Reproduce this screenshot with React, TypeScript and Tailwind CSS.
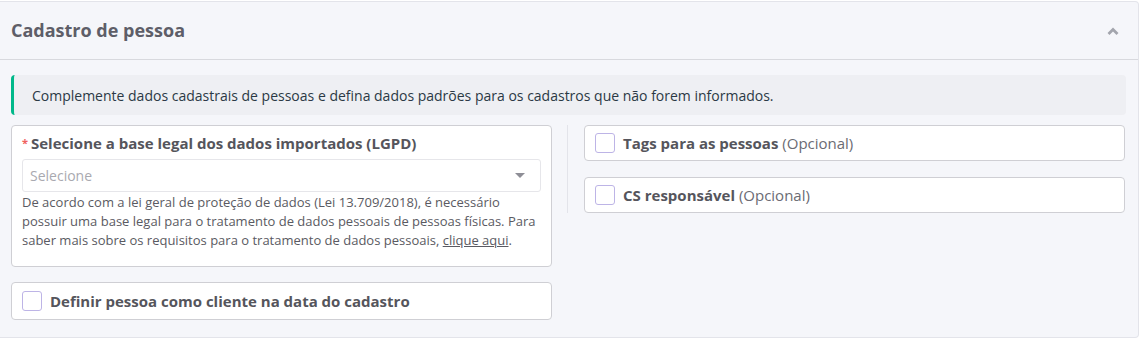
import React from 'react';

const font = { fontFamily: '"Open Sans", "Noto Sans", sans-serif' };

const CheckCard: React.FC<{ label: string; optional?: boolean; tall?: boolean }> = ({ label, optional, tall }) => (
  <label
    className={`flex items-center gap-2 bg-white border border-[#cfcfd4] rounded-[4px] px-[10px] ${
      tall ? 'h-[38px]' : 'h-[36px]'
    }`}
  >
    <span className="w-[20px] h-[20px] rounded-[3px] border border-[#bdb4e6] bg-white flex-shrink-0" />
    <span className="text-[15px] text-[#55555c]">
      <b className="font-bold">{label}</b>
      {optional && <span className="font-normal text-[#6b6b73]"> (Opcional)</span>}
    </span>
  </label>
);

export default function App() {
  return (
    <div className="w-[1140px] h-[339px] bg-white" style={font}>
      <div className="mt-px w-[1139px] h-[337px] bg-[#f5f6fa] border-t border-r border-b border-[#e3e4ea] rounded-r-[4px]">
        <div className="h-[58px] flex items-center justify-between pl-[11px] pr-[18px] border-b border-[#d8d9de]">
          <h2 className="text-[18px] font-bold text-[#5e5e68]">Cadastro de pessoa</h2>
          <svg width="14" height="10" viewBox="0 0 14 10" className="mt-[1px]">
            <path d="M2.5 8 L7 3.5 L11.5 8" fill="none" stroke="#a3a5ad" strokeWidth="2.8" />
          </svg>
        </div>

        <div className="pl-[11px] pr-[12px] pt-[15px]">
          <div className="h-[40px] flex items-center bg-[#eeeff3] border-l-[3px] border-[#00b88a] rounded-[4px] pl-[18px] text-[14px] text-[#2b3945]">
            Complemente dados cadastrais de pessoas e defina dados padrões para os cadastros que não forem informados.
          </div>

          <div className="mt-[10px] flex">
            <div className="w-[541px] flex flex-col gap-[15px]">
              <div className="bg-white border border-[#cfcfd4] rounded-[4px] px-[10px] pt-[7px] pb-[16px]">
                <div className="text-[15px] font-bold text-[#55555c] leading-[20px] flex items-center">
                  <span className="text-[#f0605d] text-[11px] leading-none mr-[3px] -mt-[2px]">*</span>
                  Selecione a base legal dos dados importados (LGPD)
                </div>
                <div className="mt-[6px] h-[33px] border border-[#e6e6ea] rounded-[3px] flex items-center justify-between pl-[7px] pr-[15px]">
                  <span className="text-[14px] text-[#a9a9b0]">Selecione</span>
                  <svg width="10" height="6" viewBox="0 0 10 6">
                    <path d="M0 0 L10 0 L5 5 Z" fill="#8e8e96" />
                  </svg>
                </div>
                <p className="text-[13px] leading-[19px] text-[#5a5a62] mt-px">
                  De acordo com a lei geral de proteção de dados (Lei 13.709/2018), é necessário possuir uma base legal
                  para o tratamento de dados pessoais de pessoas físicas. Para saber mais sobre os requisitos para o
                  tratamento de dados pessoais, <a className="underline">clique aqui</a>.
                </p>
              </div>
              <CheckCard label="Definir pessoa como cliente na data do cadastro" tall />
            </div>

            <div className="w-px h-[88px] bg-[#e3e4ea] ml-[15px] mr-[16px]" />

            <div className="w-[541px] flex flex-col gap-[16px]">
              <CheckCard label="Tags para as pessoas" optional />
              <CheckCard label="CS responsável" optional />
            </div>
          </div>
        </div>
      </div>
    </div>
  );
}
